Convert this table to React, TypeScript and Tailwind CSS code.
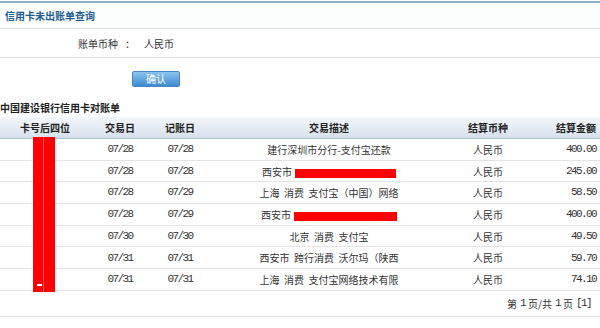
const rows = [
  { day: '07/28', post: '07/28', desc: '建行深圳市分行-支付宝还款', amount: '400.00' },
  { day: '07/28', post: '07/28', desc: '西安市', redact: 101, amount: '245.00' },
  { day: '07/28', post: '07/29', desc: '上海  消费  支付宝（中国）网络', amount: '58.50' },
  { day: '07/28', post: '07/29', desc: '西安市', redact: 103, amount: '400.00' },
  { day: '07/30', post: '07/30', desc: '北京  消费  支付宝', amount: '49.50' },
  { day: '07/31', post: '07/31', desc: '西安市  跨行消费  沃尔玛（陕西', amount: '59.70' },
  { day: '07/31', post: '07/31', desc: '上海  消费  支付宝网络技术有限', amount: '74.10' },
];

const cjk = { fontFamily: '"Noto Sans CJK SC", "Liberation Sans", sans-serif' };
const mono = 'font-["Liberation_Mono",monospace] text-[11px] tracking-[-1.6px]';

export default function App() {
  return (
    <div className="w-[600px] h-[328px] bg-white text-[10px] text-[#333] overflow-hidden" style={cjk}>
      <div className="pt-px">
        <div className="border-t-2 border-[#8eb1c9]" />
      </div>

      <div className="h-[26px] flex items-center pl-[5px] border-b border-[#e3e3e3] bg-[#fcfefe]">
        <span className="font-bold text-[#1e5c94]">信用卡未出账单查询</span>
      </div>

      <div className="h-[29px] flex items-center pl-[78px] border-b border-[#e3e3e3]">
        <span>账单币种</span>
        <span className="ml-[7px] mr-[9px]">：</span>
        <span>人民币</span>
      </div>

      <div className="pt-[13px] pl-[132px]">
        <button className="w-[48px] h-[16px] rounded-[2px] border border-[#4a87c2] bg-gradient-to-b from-[#8cc4ef] to-[#3b8ad2] text-white text-[10px] leading-none">
          确认
        </button>
      </div>

      <div className="h-[30px] pt-[10px] flex items-center font-bold text-[#222]">中国建设银行信用卡对账单</div>

      <div className="relative">
        <div className="grid grid-cols-[90px_60px_60px_238px_80px_72px] h-[22px] items-center font-bold bg-gradient-to-b from-[#f4f7fb] to-[#d6e1ec] border-b border-[#aec3d8] text-[#222]">
          <div className="text-center">卡号后四位</div>
          <div className="text-center">交易日</div>
          <div className="text-center">记账日</div>
          <div className="text-center">交易描述</div>
          <div className="text-center">结算币种</div>
          <div className="text-right pr-[4px]">结算金额</div>
        </div>

        {rows.map((r, i) => (
          <div
            key={i}
            className="grid grid-cols-[90px_60px_60px_238px_80px_72px] h-[21.7px] items-center border-b border-[#e4e4e4]"
          >
            <div />
            <div className={`text-center ${mono}`}>{r.day}</div>
            <div className={`text-center ${mono}`}>{r.post}</div>
            <div className="text-center whitespace-pre">
              {r.desc}
              {r.redact && (
                <span
                  className="inline-block align-middle ml-[3px] mt-[1px] h-[9px] bg-[#ff0000]"
                  style={{ width: r.redact }}
                />
              )}
            </div>
            <div className="text-center">人民币</div>
            <div className={`text-right pr-[4px] ${mono}`}>{r.amount}</div>
          </div>
        ))}

        <div className="absolute left-[33px] top-[20px] w-[22px] h-[155px] bg-[#ff0000]">
          <div className="absolute left-[10px] top-0 w-px h-full bg-[#ff5a5a]" />
          <div className="absolute left-[4px] bottom-[6px] w-[5px] h-[2px] bg-white" />
        </div>
      </div>

      <div className="h-[26px] flex items-center justify-end pr-[9px] border-b border-[#e4e4e4]">
        <span>第</span>
        <span className={`mx-[3px] ${mono}`}>1</span>
        <span>页/共</span>
        <span className={`mx-[3px] ${mono}`}>1</span>
        <span>页</span>
        <span className={`ml-[3px] ${mono}`}>[1]</span>
      </div>
    </div>
  );
}
